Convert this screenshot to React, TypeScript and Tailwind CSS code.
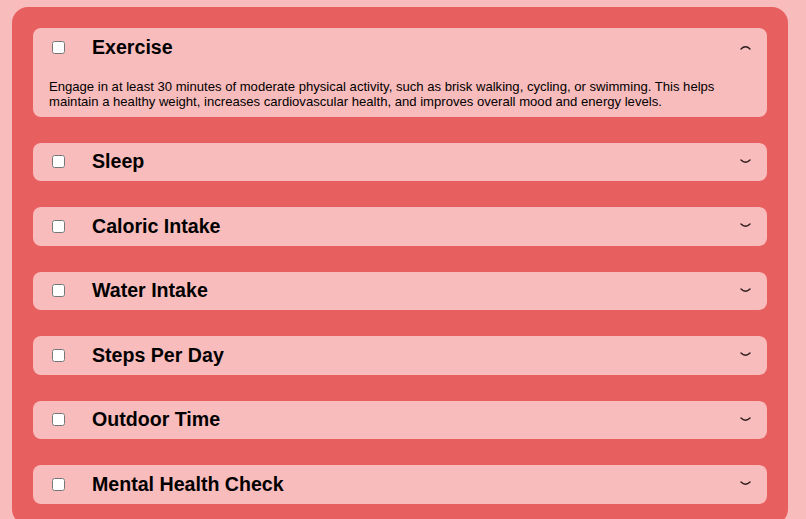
import { useState } from 'react';

const ITEMS = [
  {
    title: 'Exercise',
    body: 'Engage in at least 30 minutes of moderate physical activity, such as brisk walking, cycling, or swimming. This helps maintain a healthy weight, increases cardiovascular health, and improves overall mood and energy levels.',
  },
  { title: 'Sleep', body: 'Aim for 7-9 hours of quality sleep each night to support recovery and focus.' },
  { title: 'Caloric Intake', body: 'Track your daily calories to stay within a balanced range for your goals.' },
  { title: 'Water Intake', body: 'Drink at least 8 glasses of water throughout the day to stay hydrated.' },
  { title: 'Steps Per Day', body: 'Try to reach 10,000 steps a day by walking more during daily routines.' },
  { title: 'Outdoor Time', body: 'Spend some time outside each day to get fresh air and natural light.' },
  { title: 'Mental Health Check', body: 'Take a few minutes to reflect on how you feel and practice mindfulness.' },
];

function Chevron({ up }: { up: boolean }) {
  return (
    <svg width="11" height="6" viewBox="0 0 11 6" fill="none" className="shrink-0">
      {up ? (
        <path d="M1 5 Q5.5 0.5 10 5" stroke="#2a1a1a" strokeWidth="1.4" strokeLinecap="round" />
      ) : (
        <path d="M1 1 Q5.5 5.5 10 1" stroke="#2a1a1a" strokeWidth="1.4" strokeLinecap="round" />
      )}
    </svg>
  );
}

export default function App() {
  const [open, setOpen] = useState<number | null>(0);
  const [checked, setChecked] = useState<boolean[]>(ITEMS.map(() => false));

  return (
    <div className="min-h-screen bg-[#f9bcbc] pt-[7px] pl-[12px]" style={{ fontFamily: '"Liberation Sans", Arial, sans-serif' }}>
      <div className="w-[776px] rounded-[16px] bg-[#e85f5f] px-[21px] pt-[21px] pb-[21px] flex flex-col gap-[26px]">
        {ITEMS.map((item, i) => (
          <div key={item.title} className="rounded-[8px] bg-[#f9bcbc] text-black">
            <div
              className="flex items-center h-[38.5px] pl-[19px] pr-[16px] cursor-pointer"
              onClick={() => setOpen(open === i ? null : i)}
            >
              <input
                type="checkbox"
                checked={checked[i]}
                onClick={e => e.stopPropagation()}
                onChange={() => setChecked(checked.map((c, j) => (j === i ? !c : c)))}
                className="w-[13px] h-[13px] m-0 shrink-0"
              />
              <span className="ml-[27px] text-[19.6px] font-bold leading-[23px] flex-1">{item.title}</span>
              <Chevron up={open === i} />
            </div>
            {open === i && (
              <p className="px-[16px] pt-[12px] pb-[8px] text-[13.1px] leading-[15px]">{item.body}</p>
            )}
          </div>
        ))}
      </div>
    </div>
  );
}
